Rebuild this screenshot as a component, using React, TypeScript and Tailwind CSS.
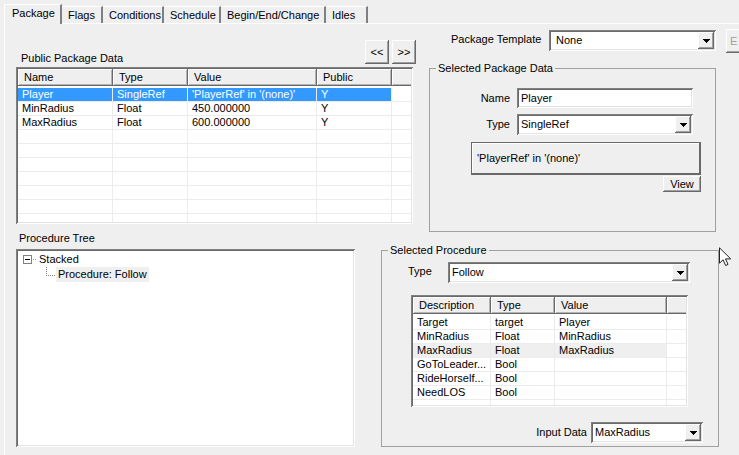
import React from "react";
import clsx from "clsx";

const sunken =
  "shadow-[inset_1px_1px_0_#808080,inset_-1px_-1px_0_#fff,inset_2px_2px_0_#696969,inset_-2px_-2px_0_#e3e3e3]";
const raised =
  "shadow-[inset_-1px_-1px_0_#696969,inset_1px_1px_0_#fff,inset_-2px_-2px_0_#a0a0a0]";

const tabs = [
  { label: "Flags", width: "w-[41px]" },
  { label: "Conditions", width: "w-[61px]" },
  { label: "Schedule", width: "w-[57px]" },
  { label: "Begin/End/Change", width: "w-[105px]" },
  { label: "Idles", width: "w-[42px]" },
];

const packageColumns = [
  { label: "Name", width: "w-[95px]" },
  { label: "Type", width: "w-[75px]" },
  { label: "Value", width: "w-auto" },
  { label: "Public", width: "w-[75px]" },
];

const packageRows = [
  ["Player", "SingleRef", "'PlayerRef' in '(none)'", "Y"],
  ["MinRadius", "Float", "450.000000", "Y"],
  ["MaxRadius", "Float", "600.000000", "Y"],
];

const procedureColumns = [
  { label: "Description", width: "w-[78px]" },
  { label: "Type", width: "w-[64px]" },
  { label: "Value", width: "w-auto" },
];

const procedureRows = [
  ["Target", "target", "Player"],
  ["MinRadius", "Float", "MinRadius"],
  ["MaxRadius", "Float", "MaxRadius"],
  ["GoToLeader...", "Bool", ""],
  ["RideHorself...", "Bool", ""],
  ["NeedLOS", "Bool", ""],
];

interface ListViewProps {
  label: string;
  columns: { label: string; width: string }[];
  rows: string[][];
  total: number;
  selected: number;
  selectedClass: string;
  className: string;
}

function ListView({ label, columns, rows, total, selected, selectedClass, className }: ListViewProps) {
  // pad with blank rows so the grid lines reach the bottom edge
  const blank = Array.from({ length: total - rows.length }, () => columns.map(() => ""));

  return (
    <div className={clsx("bg-white p-[2px]", sunken, className)}>
      <div className="h-full overflow-hidden">
        <table aria-label={label} className="w-full table-fixed border-separate border-spacing-0 text-left">
          <thead>
            <tr className="h-[17px] bg-[#efefef]">
              {columns.map((c) => (
                <th
                  key={c.label}
                  className={clsx(
                    "border-b border-r border-[#696969] pl-1.5 font-normal leading-4 whitespace-nowrap shadow-[inset_1px_1px_0_#fff,inset_-1px_-1px_0_#b4b4b4]",
                    c.width
                  )}
                >
                  {c.label}
                </th>
              ))}
              <td className="w-[19px] border-b border-[#696969] shadow-[inset_1px_1px_0_#fff,inset_0_-1px_0_#b4b4b4]" />
            </tr>
            <tr className="h-[2px]">
              <td colSpan={columns.length + 1} className="p-0" />
            </tr>
          </thead>
          <tbody>
            {[...rows, ...blank].map((row, i) => (
              <tr key={i} className="h-[14px]">
                {row.map((cell, j) => (
                  <td
                    key={j}
                    className={clsx(
                      "overflow-hidden border-b border-r border-[#ececec] py-0 pr-0 pl-1 leading-[13px] whitespace-nowrap",
                      i === selected && selectedClass
                    )}
                  >
                    {cell}
                  </td>
                ))}
                <td className="border-b border-[#ececec] p-0" />
              </tr>
            ))}
          </tbody>
        </table>
      </div>
    </div>
  );
}

interface ComboProps {
  id: string;
  value: string;
  className: string;
}

function Combo({ id, value, className }: ComboProps) {
  return (
    <div className={clsx("relative h-[21px]", className)}>
      <select
        id={id}
        defaultValue={value}
        className={clsx("h-full w-full appearance-none bg-white pl-1 outline-none", sunken)}
      >
        <option>{value}</option>
      </select>
      <span
        className={clsx(
          "pointer-events-none absolute top-[2px] right-[2px] bottom-[2px] flex w-4 items-center justify-center bg-[#efefef]",
          raised
        )}
      >
        <svg width="7" height="4" viewBox="0 0 7 4" shapeRendering="crispEdges">
          <path d="M0 0h7v1h-1v1h-1v1h-1v1h-1v-1h-1v-1h-1v-1h-1z" fill="#000" />
        </svg>
      </span>
    </div>
  );
}

interface GroupProps {
  title: string;
  className: string;
  children: React.ReactNode;
}

function Group({ title, className, children }: GroupProps) {
  return (
    <fieldset className={clsx("min-w-0 border border-[#a0a0a0]", className)}>
      <legend className="ml-1.5 h-[14px] px-[2px] leading-[14px]">{title}</legend>
      {children}
    </fieldset>
  );
}

export default function App() {
  return (
    <div className="relative flex min-h-screen flex-col overflow-hidden bg-[#efefef] pt-1 pl-1 font-['Liberation_Sans',Arial,sans-serif] text-[11px] text-black">
      <nav role="tablist" className="flex h-5 items-end">
        <button
          role="tab"
          aria-selected="true"
          className="z-10 h-5 w-[58px] border-t border-l border-r-2 border-t-white border-l-white border-r-[#808080] bg-[#efefef] pb-1 pl-[7px] text-left"
        >
          Package
        </button>
        {tabs.map((t) => (
          <button
            key={t.label}
            role="tab"
            aria-selected="false"
            className={clsx(
              "mb-px h-[17px] border-t border-r-2 border-t-white border-r-[#808080] pl-1.5 text-left leading-4 whitespace-nowrap",
              t.width
            )}
          >
            {t.label}
          </button>
        ))}
      </nav>

      <main className="-mt-px flex flex-1 flex-col border-t border-l border-white pr-5 pb-2 pl-[11px]">
        <div className="grid grid-cols-[400fr_287fr] gap-x-[13px] pr-[3px]">
          <section className="flex flex-col">
            <div className="mt-4 flex h-[27px] items-start gap-[3px]">
              <h2 className="flex-1 pt-[11px] pl-[5px] leading-[14px]">Public Package Data</h2>
              <button className={clsx("h-6 w-6 bg-[#efefef]", raised)}>&lt;&lt;</button>
              <button className={clsx("h-6 w-6 bg-[#efefef]", raised)}>&gt;&gt;</button>
            </div>
            <ListView
              label="Public Package Data"
              columns={packageColumns}
              rows={packageRows}
              total={10}
              selected={0}
              selectedClass="bg-[#3399ff] text-white"
              className="mr-[3px] h-[157px]"
            />
          </section>

          <section className="flex flex-col">
            {/* the last button runs past the right edge of the window */}
            <div className="mt-1.5 -mr-[60px] flex items-start">
              <label htmlFor="template" className="w-[120px] pt-[2px] pl-[22px] leading-[14px]">
                Package Template
              </label>
              <Combo id="template" value="None" className="flex-1 [&>select]:pl-[7px]" />
              <button
                disabled
                className={clsx("-mt-px ml-2.5 h-6 w-[50px] bg-[#efefef] pl-1 text-left text-[#a0a0a0]", raised)}
              >
                E
              </button>
            </div>
            <Group title="Selected Package Data" className="mt-2 h-[171px]">
              <div className="mt-[13px] flex items-center pr-[22px]">
                <label htmlFor="name" className="w-[87px] pr-[7px] text-right">
                  Name
                </label>
                <input
                  id="name"
                  defaultValue="Player"
                  className={clsx("h-5 min-w-0 flex-1 bg-white px-1 outline-none", sunken)}
                />
              </div>
              <div className="mt-1.5 flex items-center pr-[22px]">
                <label htmlFor="refType" className="w-[87px] pr-[7px] text-right">
                  Type
                </label>
                <Combo id="refType" value="SingleRef" className="flex-1" />
              </div>
              <div className="mt-[7px] flex flex-col items-end pr-3.5 pl-[41px]">
                <button className="h-[33px] w-full border border-r-2 border-b-2 border-[#696969] pl-[5px] text-left shadow-[inset_1px_1px_0_#fff]">
                  'PlayerRef' in '(none)'
                </button>
                <button className={clsx("mt-px h-4 w-[38px] leading-4", raised)}>View</button>
              </div>
            </Group>
          </section>
        </div>

        <div className="-mt-px grid flex-1 grid-cols-[339fr_338fr] gap-x-[26px]">
          <section className="flex flex-col">
            <h2 className="pl-[3px] leading-[14px]">Procedure Tree</h2>
            <ul className={clsx("mt-1 flex-1 bg-white pt-[3px] pl-[7px]", sunken)}>
              <li>
                <div className="flex h-[15px] items-center">
                  <svg width="13" height="9" viewBox="0 0 13 9" shapeRendering="crispEdges" fill="none">
                    <path d="M0.5 0.5h8v8h-8z" stroke="#808080" />
                    <path d="M2 4.5h5" stroke="#000" />
                    <path d="M10 4.5h3" stroke="#a0a0a0" strokeDasharray="1 1" />
                  </svg>
                  <span className="pl-[3px]">Stacked</span>
                </div>
                <ul className="pl-[23px]">
                  <li className="flex h-[15px] items-start">
                    <svg width="10" height="9" viewBox="0 0 10 9" shapeRendering="crispEdges" fill="none">
                      <path d="M0.5 0v8.5h9" stroke="#808080" strokeDasharray="1 1" />
                    </svg>
                    <span className="bg-[#efefef] px-[2px] leading-[15px]">Procedure: Follow</span>
                  </li>
                </ul>
              </li>
            </ul>
          </section>

          <Group title="Selected Procedure" className="mt-3">
            <div className="mt-[5px] flex pr-7 pl-[26px]">
              <label htmlFor="procType" className="w-10 pt-[2px] leading-[14px]">
                Type
              </label>
              <Combo id="procType" value="Follow" className="flex-1" />
            </div>
            <ListView
              label="Selected Procedure"
              columns={procedureColumns}
              rows={procedureRows}
              total={7}
              selected={2}
              selectedClass="bg-[#efefef]"
              className="mt-3 mr-[30px] ml-[29px] h-[112px]"
            />
            <div className="mt-[15px] flex items-center justify-end pr-[15px] pb-[3px]">
              <label htmlFor="inputData" className="pr-1">
                Input Data
              </label>
              <Combo id="inputData" value="MaxRadius" className="w-[112px]" />
            </div>
          </Group>
        </div>
      </main>

      {/* mouse pointer */}
      <svg className="absolute top-[247px] right-[7px]" width="13" height="20" viewBox="0 0 13 20">
        <path
          d="M0.5 0.8v15.4l3.6-3.4 2.5 5.7 2.4-1.1-2.5-5.5h5.2z"
          fill="#fff"
          stroke="#222"
          strokeLinejoin="round"
        />
      </svg>
    </div>
  );
}
